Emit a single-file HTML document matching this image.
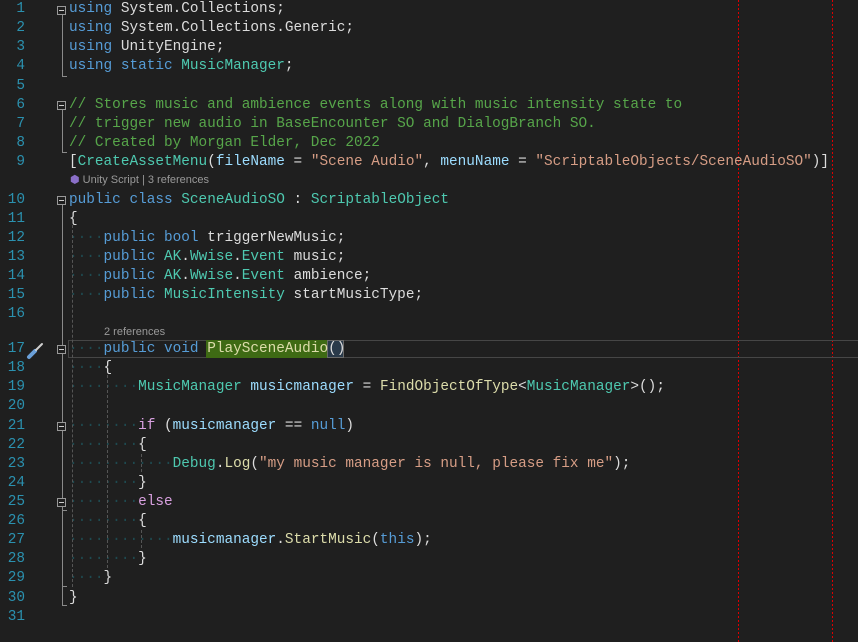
<!DOCTYPE html>
<html><head><meta charset="utf-8"><style>
html,body{margin:0;padding:0;background:#1f1f1f;width:858px;height:642px;overflow:hidden}
#w{position:relative;width:858px;height:642px;font-family:"Liberation Mono",monospace;font-size:14.4px;}
#in{position:absolute;left:0;top:2px;width:858px;height:640px}
.r{position:absolute;left:0;height:19px;line-height:19px;white-space:pre;width:858px}
.n{position:absolute;left:0;width:25px;text-align:right;color:#2b91af}
.c{position:absolute;left:69px;color:#dcdcdc}
.k{color:#569cd6}.t{color:#4ec9b0}.g{color:#57a64a}.s{color:#d69d85}.m{color:#dcdcaa}.v{color:#9cdcfe}.p{color:#d8a0df}
.d{color:#1e4a50}
.lens{position:absolute;font-family:"Liberation Sans",sans-serif;font-size:11px;color:#999;line-height:19px}
.f{position:absolute;left:57px;width:9px;height:9px;border:1px solid #999;box-sizing:border-box;background:#1f1f1f}
.f:after{content:"";position:absolute;left:1px;top:3px;width:5px;height:1px;background:#ccc}
.vl{position:absolute;width:1px;background:#8a8a8a}
.hl{position:absolute;height:1px;width:5px;background:#8a8a8a}
.ig{position:absolute;width:0;border-left:1px dashed #555}
.red{position:absolute;top:0;height:642px;width:1px;background:repeating-linear-gradient(to bottom,#d00 0,#d00 2px,transparent 2px,transparent 4px)}
</style></head><body><div id="w">
<div class="red" style="left:738px"></div><div class="red" style="left:832px"></div>
<div id="in">
<div style="position:absolute;left:68px;top:338px;width:800px;height:18px;border:1px solid #464646;box-sizing:border-box"></div>
<div style="position:absolute;left:206px;top:338px;width:122px;height:18px;background:#3e6a14"></div>
<div style="position:absolute;left:327px;top:338px;width:17px;height:18px;border:1px solid #6a6a6a;box-sizing:border-box;background:#2a3a4a"></div>

<div class="r" style="top:-2px"><span class="n">1</span><span class="c"><span class="k">using</span> System.Collections;</span></div>
<div class="r" style="top:17px"><span class="n">2</span><span class="c"><span class="k">using</span> System.Collections.Generic;</span></div>
<div class="r" style="top:36px"><span class="n">3</span><span class="c"><span class="k">using</span> UnityEngine;</span></div>
<div class="r" style="top:55px"><span class="n">4</span><span class="c"><span class="k">using static</span> <span class="t">MusicManager</span>;</span></div>
<div class="r" style="top:75px"><span class="n">5</span></div>
<div class="r" style="top:94px"><span class="n">6</span><span class="c g">// Stores music and ambience events along with music intensity state to</span></div>
<div class="r" style="top:113px"><span class="n">7</span><span class="c g">// trigger new audio in BaseEncounter SO and DialogBranch SO.</span></div>
<div class="r" style="top:132px"><span class="n">8</span><span class="c g">// Created by Morgan Elder, Dec 2022</span></div>
<div class="r" style="top:151px"><span class="n">9</span><span class="c">[<span class="t">CreateAssetMenu</span>(<span class="v">fileName</span> = <span class="s">"Scene Audio"</span>, <span class="v">menuName</span> = <span class="s">"ScriptableObjects/SceneAudioSO"</span>)]</span></div>
<div class="lens" style="left:70px;top:169px"><span style="color:#8a6fc8">⬢</span> Unity Script | 3 references</div>
<div class="r" style="top:189px"><span class="n">10</span><span class="c"><span class="k">public class</span> <span class="t">SceneAudioSO</span> : <span class="t">ScriptableObject</span></span></div>
<div class="r" style="top:208px"><span class="n">11</span><span class="c">{</span></div>
<div class="r" style="top:227px"><span class="n">12</span><span class="c"><span class="d">····</span><span class="k">public bool</span> triggerNewMusic;</span></div>
<div class="r" style="top:246px"><span class="n">13</span><span class="c"><span class="d">····</span><span class="k">public</span> <span class="t">AK</span>.<span class="t">Wwise</span>.<span class="t">Event</span> music;</span></div>
<div class="r" style="top:265px"><span class="n">14</span><span class="c"><span class="d">····</span><span class="k">public</span> <span class="t">AK</span>.<span class="t">Wwise</span>.<span class="t">Event</span> ambience;</span></div>
<div class="r" style="top:284px"><span class="n">15</span><span class="c"><span class="d">····</span><span class="k">public</span> <span class="t">MusicIntensity</span> startMusicType;</span></div>
<div class="r" style="top:303px"><span class="n">16</span></div>
<div class="lens" style="left:104px;top:321px">2 references</div>
<div class="r" style="top:338px"><span class="n">17</span><span class="c"><span class="d">····</span><span class="k">public void</span> <span class="m">PlaySceneAudio</span>()</span></div>
<div class="r" style="top:357px"><span class="n">18</span><span class="c"><span class="d">····</span>{</span></div>
<div class="r" style="top:376px"><span class="n">19</span><span class="c"><span class="d">········</span><span class="t">MusicManager</span> <span class="v">musicmanager</span> = <span class="m">FindObjectOfType</span>&lt;<span class="t">MusicManager</span>&gt;();</span></div>
<div class="r" style="top:395px"><span class="n">20</span></div>
<div class="r" style="top:415px"><span class="n">21</span><span class="c"><span class="d">········</span><span class="p">if</span> (<span class="v">musicmanager</span> == <span class="k">null</span>)</span></div>
<div class="r" style="top:434px"><span class="n">22</span><span class="c"><span class="d">········</span>{</span></div>
<div class="r" style="top:453px"><span class="n">23</span><span class="c"><span class="d">············</span><span class="t">Debug</span>.<span class="m">Log</span>(<span class="s">"my music manager is null, please fix me"</span>);</span></div>
<div class="r" style="top:472px"><span class="n">24</span><span class="c"><span class="d">········</span>}</span></div>
<div class="r" style="top:491px"><span class="n">25</span><span class="c"><span class="d">········</span><span class="p">else</span></span></div>
<div class="r" style="top:510px"><span class="n">26</span><span class="c"><span class="d">········</span>{</span></div>
<div class="r" style="top:529px"><span class="n">27</span><span class="c"><span class="d">············</span><span class="v">musicmanager</span>.<span class="m">StartMusic</span>(<span class="k">this</span>);</span></div>
<div class="r" style="top:548px"><span class="n">28</span><span class="c"><span class="d">········</span>}</span></div>
<div class="r" style="top:567px"><span class="n">29</span><span class="c"><span class="d">····</span>}</span></div>
<div class="r" style="top:587px"><span class="n">30</span><span class="c">}</span></div>
<div class="r" style="top:606px"><span class="n">31</span></div>

<div class="vl" style="left:62px;top:13px;height:62px"></div><div class="hl" style="left:62px;top:74px"></div>
<div class="vl" style="left:62px;top:108px;height:43px"></div><div class="hl" style="left:62px;top:150px"></div>
<div class="vl" style="left:62px;top:203px;height:401px"></div><div class="hl" style="left:62px;top:603px"></div>
<div class="hl" style="left:62px;top:584px"></div><div class="hl" style="left:62px;top:508px"></div>
<div class="f" style="top:4px"></div><div class="f" style="top:99px"></div><div class="f" style="top:194px"></div>
<div class="f" style="top:343px"></div><div class="f" style="top:420px"></div><div class="f" style="top:496px"></div>
<div class="ig" style="left:72px;top:223px;height:362px"></div>
<div class="ig" style="left:107px;top:373px;height:193px"></div>
<div class="ig" style="left:141px;top:452px;height:18px"></div>
<div class="ig" style="left:141px;top:528px;height:18px"></div>
<svg style="position:absolute;left:26px;top:338px" width="20" height="20" viewBox="0 0 20 20"><path d="M3 17 L9 11" stroke="#6a9fd8" stroke-width="4" stroke-linecap="round"/><path d="M10 10 L16 4" stroke="#cfcfcf" stroke-width="2" stroke-linecap="round"/></svg>
</div>
</div></body></html>
